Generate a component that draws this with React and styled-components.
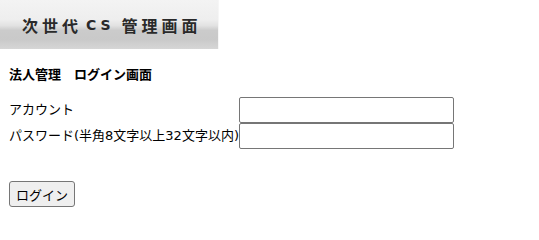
import React, { useState } from "react";
import styled, { createGlobalStyle } from "styled-components";

const GlobalStyle = createGlobalStyle`
    body {
        margin: 0;
        background: #ffffff;
        color: #000000;
        font-family: "Noto Sans CJK JP", "Noto Sans", sans-serif;
        font-size: 13px;
    }
`;

const Banner = styled.div`
    width: 219px;
    height: 49px;
    display: flex;
    align-items: center;
    padding-left: 22px;
    box-sizing: border-box;
    background: linear-gradient(
        #f3f3f3 0%,
        #eeeeee 40%,
        #e2e2e2 52%,
        #cbcbcb 62%,
        #c9c9c9 80%,
        #d6d6d6 100%
    );
    border-right: 1px solid #f6f6f6;
    color: #2a2a2a;
    font-size: 16px;
    font-weight: bold;
    letter-spacing: 4px;
    white-space: pre;
`;

const Latin = styled.span`
    font-family: "DejaVu Sans", sans-serif;
    font-size: 14px;
    letter-spacing: 4px;
    margin-left: 4px;
    margin-right: -2px;
`;

const Content = styled.div`
    padding-left: 9px;
`;

const Title = styled.h1`
    margin: 16px 0 0;
    font-size: 13px;
    line-height: 18px;
    font-weight: bold;
`;

const Form = styled.form`
    margin-top: 14px;
`;

const Table = styled.table`
    border-collapse: collapse;
    border-spacing: 0;
`;

const Label = styled.td`
    padding: 0;
    height: 26px;
    vertical-align: middle;
    white-space: nowrap;
    line-height: 18px;
    font-family: "DejaVu Sans", "Noto Sans CJK JP", sans-serif;
`;

const Cell = styled.td`
    padding: 0;
    vertical-align: middle;
`;

const Input = styled.input`
    display: block;
    width: 215px;
    height: 26px;
    box-sizing: border-box;
    margin: 0;
    border: 1px solid #767676;
    border-radius: 2px;
    padding: 1px 3px;
    font-family: inherit;
    font-size: 13px;
`;

const Button = styled.button`
    margin-top: 32px;
    height: 26px;
    padding: 0 6px;
    border: 1px solid #767676;
    border-radius: 3px;
    background: #efefef;
    color: #000000;
    font-family: inherit;
    font-size: 13px;
    cursor: pointer;
    &:hover {
        background: #e5e5e5;
    }
`;

function App() {
    const [account, setAccount] = useState("");
    const [password, setPassword] = useState("");

    function login(e) {
        e.preventDefault();
    }

    return (
        <>
            <GlobalStyle />
            <Banner>
                次世代<Latin>{"CS "}</Latin>管理画面
            </Banner>
            <Content>
                <Title>法人管理　ログイン画面</Title>
                <Form onSubmit={login}>
                    <Table>
                        <tbody>
                            <tr>
                                <Label>アカウント</Label>
                                <Cell>
                                    <Input
                                        type="text"
                                        value={account}
                                        onChange={(e) => setAccount(e.target.value)}
                                    />
                                </Cell>
                            </tr>
                            <tr>
                                <Label>パスワード(半角8文字以上32文字以内)</Label>
                                <Cell>
                                    <Input
                                        type="password"
                                        value={password}
                                        onChange={(e) => setPassword(e.target.value)}
                                    />
                                </Cell>
                            </tr>
                        </tbody>
                    </Table>
                    <Button type="submit">ログイン</Button>
                </Form>
            </Content>
        </>
    );
}

export default App;
